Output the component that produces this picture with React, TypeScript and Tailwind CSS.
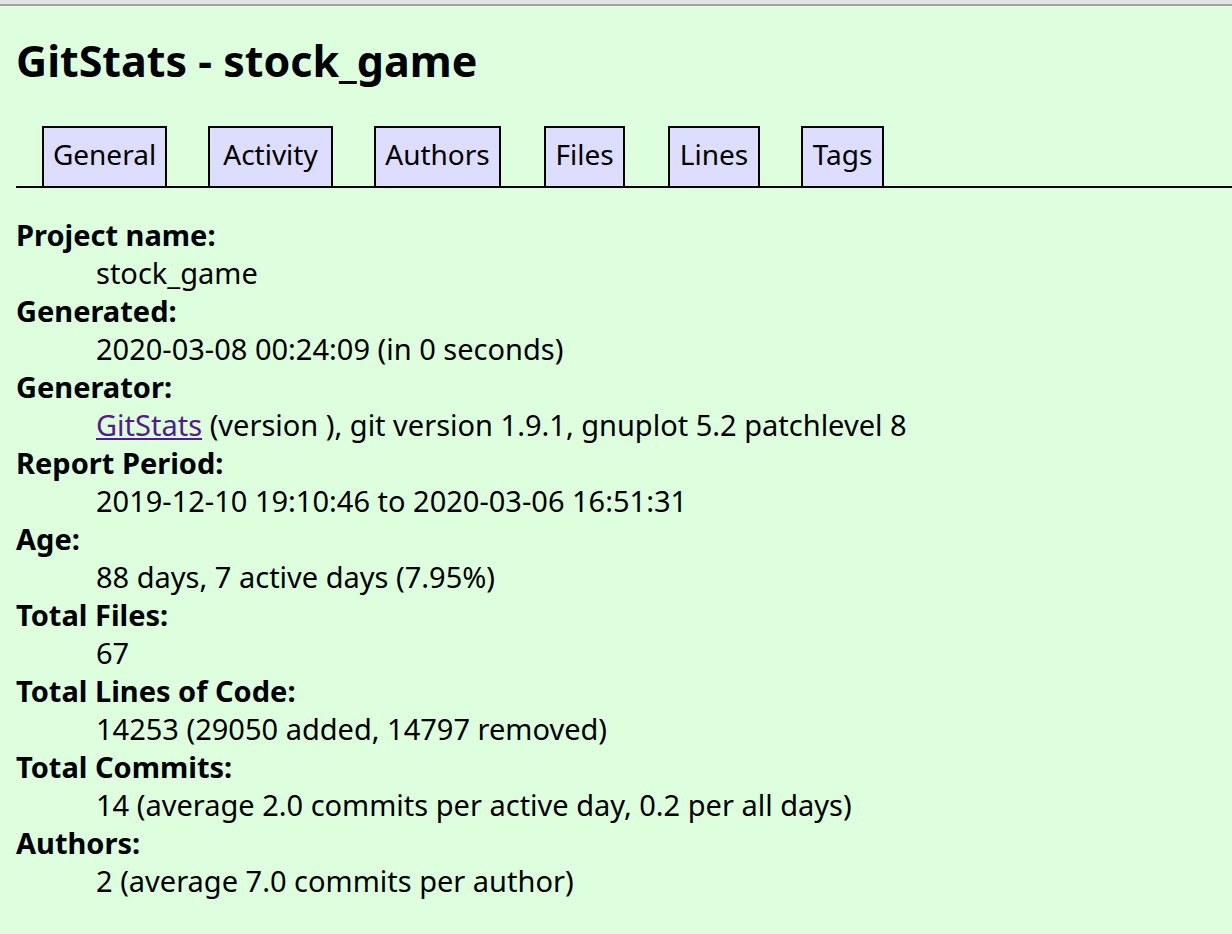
import React from "react";

const tabs = [
  { label: "General", cls: "w-[125px]" },
  { label: "Activity", cls: "w-[125px] ml-[41px]" },
  { label: "Authors", cls: "w-[127px] ml-[41px]" },
  { label: "Files", cls: "w-[81px] ml-[43px]" },
  { label: "Lines", cls: "w-[92px] ml-[43px]" },
  { label: "Tags", cls: "w-[83px] ml-[41px]" },
];

const rows: { term: string; desc: React.ReactNode }[] = [
  { term: "Project name", desc: "stock_game" },
  { term: "Generated", desc: "2020-03-08 00:24:09 (in 0 seconds)" },
  {
    term: "Generator",
    desc: (
      <>
        <a href="#" className="text-[#551a8b] underline">
          GitStats
        </a>{" "}
        (version ), git version 1.9.1, gnuplot 5.2 patchlevel 8
      </>
    ),
  },
  { term: "Report Period", desc: "2019-12-10 19:10:46 to 2020-03-06 16:51:31" },
  { term: "Age", desc: "88 days, 7 active days (7.95%)" },
  { term: "Total Files", desc: "67" },
  { term: "Total Lines of Code", desc: "14253 (29050 added, 14797 removed)" },
  { term: "Total Commits", desc: "14 (average 2.0 commits per active day, 0.2 per all days)" },
  { term: "Authors", desc: "2 (average 7.0 commits per author)" },
];

export default function App() {
  return (
    <div className="min-h-screen bg-[#ddffdd] text-black font-['Noto_Sans',sans-serif]">
      <div className="h-[4px] bg-[#e3e3e3]" />
      <div className="h-[2px] bg-[#a3a3a3]" />
      <div className="pl-4">
        <h1 className="pt-[31px] text-[43px] leading-[48px] font-bold">GitStats - stock_game</h1>

        <nav className="mt-[41px] h-[62px] border-b-2 border-black pl-[26px] flex items-end">
          <ul className="flex">
            {tabs.map((t) => (
              <li key={t.label} className={t.cls}>
                <a
                  href="#"
                  className="block h-[60px] text-center border-2 border-b-0 border-black bg-[#ddddff] text-[28px] leading-[52px]"
                >
                  {t.label}
                </a>
              </li>
            ))}
          </ul>
        </nav>

        <dl className="mt-[28px] text-[29px] leading-[38px]">
          {rows.map((r) => (
            <React.Fragment key={r.term}>
              <dt className="font-bold">{r.term}:</dt>
              <dd className="pl-[80px]">{r.desc}</dd>
            </React.Fragment>
          ))}
        </dl>
      </div>
    </div>
  );
}
